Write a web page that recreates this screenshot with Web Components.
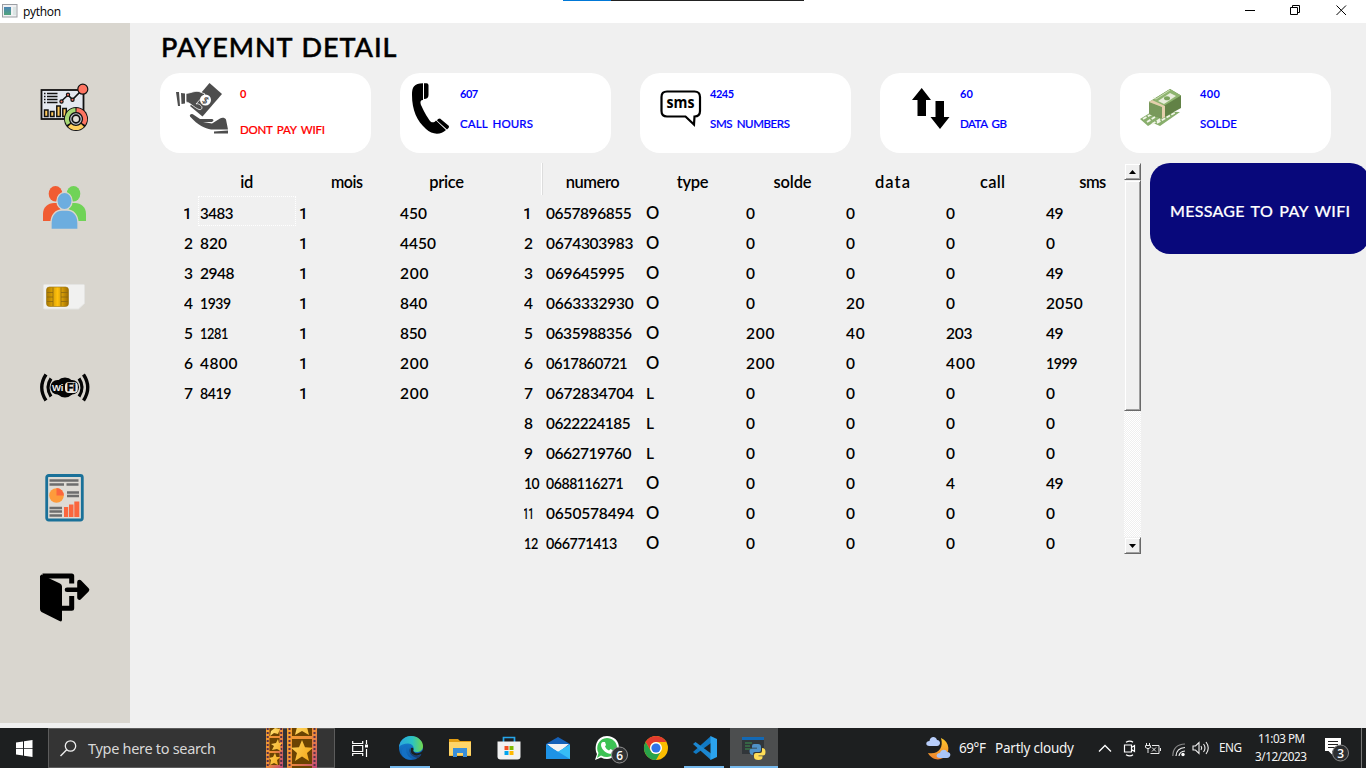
<!DOCTYPE html>
<html lang="en">
<head>
<meta charset="utf-8">
<title>python</title>
<style>
html,body{margin:0;height:100%;overflow:hidden;background:#f0f0f0}
</style>
</head>
<body>
<app-desktop></app-desktop>
<script>
const define=(name,html,setup)=>{
  const t=document.createElement('template');t.innerHTML=html;
  customElements.define(name,class extends HTMLElement{
    constructor(){super();this.attachShadow({mode:'open'}).append(t.content.cloneNode(true));}
    connectedCallback(){if(setup)setup.call(this,this.shadowRoot);}
  });
};

/* Text run fitted to a given width (w) at a given size (s): tracking first, then a horizontal squeeze. */
define('fit-text',`<style>:host{display:inline-block;white-space:pre;line-height:1;flex:none}span{display:inline-block;transform-origin:0 0}</style><span><slot></slot></span>`,function(r){
  this.style.fontSize=this.getAttribute('s')+'px';
  const w=+this.getAttribute('w'),sp=r.querySelector('span');
  const n=this.textContent.length;
  if(!w)return;
  this.style.width=w+'px';
  sp.style.letterSpacing='0px';
  const nat=sp.getBoundingClientRect().width;
  if(n<2)return;
  const ls=Math.max(-.5,(w-nat)/(n-1));
  sp.style.letterSpacing=ls+'px';
  const full=nat+ls*(n-1);
  if(full>w+.5)sp.style.transform=`scaleX(${w/full})`;
});

const ICONS={
dash:`<svg width="50" height="50" viewBox="0 0 50 50"><rect x="1.500" y="6" width="42" height="29" fill="#e4e8f0" stroke="#111" stroke-width="1.8"/><path d="M4 9.500h1.500M4 12.500h1.500M4 15.500h1.500M4 18.500h1.500M7 9.500h10.500M7 12.500h10.500M7 15.500h10.500M7 18.500h10.500" stroke="#111" stroke-width="1.7"/><g fill="#ffc95c" stroke="#111" stroke-width="1.500"><rect x="4.500" y="26" width="3.500" height="6.500"/><rect x="10.500" y="27.500" width="3.500" height="5"/><rect x="16.800" y="22" width="3.500" height="10.500"/><rect x="22.800" y="24.500" width="3.500" height="8"/></g><path d="M21 17.500L28 11l4.500 4.500L42 6" fill="none" stroke="#111" stroke-width="1.6"/><g fill="#fe7562" stroke="#111" stroke-width="1.2"><circle cx="21.500" cy="17.500" r="1.600"/><circle cx="28" cy="10.800" r="1.600"/><circle cx="32.500" cy="15.800" r="1.600"/><circle cx="42.800" cy="5.200" r="5"/></g><circle cx="36" cy="35" r="12" fill="#111"/><g fill="none" stroke-width="4"><path d="M36.500 26A9 9 0 0 1 43.500 40" stroke="#fe7562"/><path d="M42.500 41.300A9 9 0 0 1 29.500 41.300" stroke="#ffd05f"/><path d="M28.500 40A9 9 0 0 1 35.500 26" stroke="#a7d875"/></g><circle cx="36" cy="35" r="5.800" fill="#c4c8d2"/><circle cx="36" cy="35" r="3.800" fill="#e2ded7" stroke="#111" stroke-width="1.700"/></svg>`,
people:`<svg width="50" height="50" viewBox="0 0 50 50"><g fill="#f15c32"><ellipse cx="15.500" cy="9.800" rx="6.800" ry="7.800"/><path d="M3 37v-7c0-7 5-11 11-11h4l3 8-7 10z"/></g><g fill="#70d357"><ellipse cx="33.500" cy="9.800" rx="6.800" ry="7.800"/><path d="M46 37v-7c0-7-5-11-11-11h-4l-3 8 7 10z"/></g><g fill="#6caddf" stroke="#d9d6cf" stroke-width="1.300"><ellipse cx="24.500" cy="17" rx="7.600" ry="8.600"/><path d="M11 45.500V39c0-8 5-13 11-13h5c6 0 11 5 11 13v6.500z"/></g></svg>`,
sim:`<svg width="50" height="50" viewBox="0 0 50 50"><defs><linearGradient id="g"><stop stop-color="#a87800"/><stop offset=".5" stop-color="#ffc10d"/><stop offset="1" stop-color="#9c6b00"/></linearGradient></defs><path d="M4.500 11.500h39a1 1 0 0 1 1 1v18l-6 5.500h-34a1 1 0 0 1-1-1V12.500a1 1 0 0 1 1-1z" fill="#f1f1f0" stroke="#e4e4e2"/><rect x="6.500" y="14" width="22" height="19.500" rx="3" fill="url(#g)" stroke="#98710a" stroke-width=".6"/><path d="M7 19.500h6M7 24h6M7 28.500h6M13 14.500v18.500M21 14.500v18.500M21 19.500h7M21 24h7M21 28.500h7" fill="none" stroke="#8b6812" stroke-width=".8"/></svg>`,
wifi:`<svg width="50" height="50" viewBox="0 0 50 50"><circle cx="25" cy="23.500" r="10" fill="#050505"/><rect x="10.500" y="16" width="28.500" height="14.500" rx="7" fill="#050505"/><rect x="25" y="18" width="12.800" height="11" rx="4" fill="#e9e6df"/><text x="12" y="26.800" font-family="Liberation Sans" font-weight="700" font-size="9.500" fill="#eee" textLength="11.500" lengthAdjust="spacingAndGlyphs">Wi</text><text x="27" y="27.200" font-family="Liberation Sans" font-weight="700" font-size="10" fill="#000" stroke="#000" stroke-width=".5">Fi</text><path d="M11 14.500q-6 9 0 18M39 14.500q6 9 0 18" fill="none" stroke="#050505" stroke-width="3.200"/><path d="M6 10.500q-8.500 13 0 26M43.500 10.500q8.500 13 0 26" fill="none" stroke="#050505" stroke-width="3.400"/></svg>`,
report:`<svg width="50" height="50" viewBox="0 0 50 50"><rect x="6.700" y="1.500" width="35.600" height="44.500" rx="2" fill="#dedbd5" stroke="#1a7199" stroke-width="2.800"/><path d="M9.500 6.500h29M9.500 10.500h14.500M26.500 10.500h12M27 18.500h12M27 22h12M9.500 34h12.500M9.500 37.500h12.500M9.500 41.500h12.500" stroke="#6d6d6d" stroke-width="2.300"/><circle cx="16.500" cy="21.500" r="7.300" fill="#fe9b3b"/><path d="M16.500 14a7.500 7.500 0 0 1 7.300 7.500h-7.300z" fill="#fb663d"/><path d="M24 33h4.200v10H24zM29 30.500h4.500v12.500H29zM34.300 27.500h5v15.500h-5z" fill="#fb663d"/></svg>`,
exit:`<svg width="50" height="50" viewBox="0 0 50 50"><path d="M2.500 3H31.700V10.500M21 35.200H31.700V23" fill="none" stroke="#000" stroke-width="5" stroke-linejoin="round"/><path d="M0 3L1.500 1.500 10.500 6 20 10.500q2 .8 2 3V46.500q0 2.800-2.500 1.500L1.500 39Q0 38 0 36z"/><path d="M27 16.800H44M39.500 9L47 16.800 39.500 24.500z" stroke="#000" stroke-width="4.600" stroke-linecap="round" stroke-linejoin="round"/></svg>`,
pay:`<svg width="53" height="54" viewBox="0 0 53 54"><g fill="#4d4d4d"><path d="M33.500 1L46 12 26.500 34.500 14 24z"/><path d="M0 10h3l1 14H2zM5 11l4 .5v10L5.500 22z"/><path d="M10 11.500c5-.5 9-3 13-2l6 2.500-9 10c2-1 5 1 6 3 0 2-1 3-3 2.500-5-2-9-7-13-7.500z" stroke="#fff" stroke-width=".8"/><path d="M14 35.500c-1-2 2-3.500 4-1.500l6 4h12c2.500.5 1.500 3-1 3H27l9 1.500 8-5c2-1.500 5-1 6 1l2 10H35c-6-1-13-4-21-13z" transform="translate(0 -1)"/><path d="M38 49.500l14-1v3H38z"/></g><circle cx="29.500" cy="18" r="5.500" fill="#fff"/><text x="27" y="21.500" font-size="9" font-weight="700" font-family="Lato" fill="#4d4d4d" transform="rotate(35 29.500 18)">$</text></svg>`,
phone:`<svg width="38" height="52" viewBox="0 0 38 52"><path d="M0 12C0 4 2 .5 11 .3V17c-3-.3-3 3-1.500 6 3 7 7 13 9 15.500 2 1.500 4 1 5.500-1L34 47C29 52 20 52 14 46 5 38 0 27 0 12z"/><path d="M12 .3h2.500q2 0 2 2V12q0 4-4.500 4zM26 36l2-.5 9 7.500q.5 1.500-2 3.500l-10-9z"/></svg>`,
sms:`<svg width="42" height="38" viewBox="0 0 42 38"><path d="M7 1.500h27.500q5.500 0 5.500 5.500v14q0 5.500-5.500 5.500l-.5 8-8.500-8H7Q1.500 26.500 1.500 21V7Q1.500 1.500 7 1.500z" fill="#fff" stroke="#000" stroke-width="2.200"/><text x="6.500" y="18" font-family="Open Sans" font-weight="700" font-size="15.500" textLength="28" lengthAdjust="spacingAndGlyphs">sms</text></svg>`,
data:`<svg width="38" height="42" viewBox="0 0 38 42"><path d="M9.700 0L19 12h-5v16H5.500V12H0zM23.500 13H32v16h5.500L28 41 18.500 29h5z"/></svg>`,
cash:`<svg width="42" height="40" viewBox="0 0 42 40"><path d="M0 31l13-8 27 1-20 14-7-3-5 3z" fill="#88ae6c"/><path d="M3 31l9-5M7 34l8-5M17 35l19-11M12 36l10-6" stroke="#f1f4e7" stroke-width="1.800" stroke-dasharray="4 1.500"/><path d="M9 14L30 1l11 6.500V20L22 30.500 9 26z" fill="#628246"/><path d="M9 14l13 5v11.500L9 26z" fill="#78995b"/><path d="M9 14L30 1l11 6.500L22 19z" fill="#8eb46f"/><path d="M18 13l12-8 6 3-12 8z" fill="#e8eddb"/><ellipse cx="27" cy="10.300" rx="3" ry="2" fill="#7ca45d"/><path d="M12 12l13 6v11l-3 1.500V19L9 14z" fill="#e4cfac"/><path d="M13 9.500l3 1.500 14-9" stroke="#e3edcf" stroke-width=".7" fill="none"/></svg>`,
app:`<svg width="16" height="14" viewBox="0 0 16 14"><defs><linearGradient id="a" x2="0" y2="1"><stop stop-color="#4b84b5"/><stop offset="1" stop-color="#51a47b"/></linearGradient></defs><rect x=".5" y=".5" width="14.500" height="12.500" fill="#f1f1f3" stroke="#9b9ea3"/><rect x="2" y="3" width="7" height="8" fill="url(#a)"/><path d="M11 3h3v8h-3z" fill="#dbe5e4"/></svg>`,
start:`<svg width="17" height="17" viewBox="0 0 17 17"><path d="M0 2.500l7-1v6.700H0zM8 1.300L16.500 0v8.200H8zM0 9h7v6.500l-7-1zM8 9h8.500v8L8 15.800z" fill="#fff"/></svg>`,
find:`<svg width="17" height="17" viewBox="0 0 17 17"><circle cx="10.500" cy="6" r="5.200" fill="none" stroke="#eee" stroke-width="1.300"/><path d="M6.700 9.800L.5 16" stroke="#eee" stroke-width="1.400"/></svg>`,
film:`<svg width="52" height="40" viewBox="0 0 52 40" style="overflow:hidden"><defs><linearGradient id="f" x2="1" y2="1"><stop stop-color="#f5a12e"/><stop offset=".5" stop-color="#ee8d39"/><stop offset="1" stop-color="#c14879"/></linearGradient><linearGradient id="s" x2="1" y2="1"><stop stop-color="#ffe377"/><stop offset="1" stop-color="#f5a513"/></linearGradient></defs><rect width="17" height="40" fill="url(#f)"/><rect x="21" width="30" height="40" fill="url(#f)"/><path d="M1.700 0v40M15.200 0v40M23.500 0v40M48.500 0v40" stroke="#57304b" stroke-width="2" stroke-dasharray="2 2"/><path d="M3.500 0h10v8h-10zM3.500 10h10v13h-10zM3.500 25h10v12h-10zM26 0h20v8H26zM26 11h20v25H26zM26 38h20v2H26z" fill="#6b4302"/><path fill="url(#s)" d="M36 12l3 7.300 8 .5-6 5.200 2 8-7-4.500-7 4.500 2-8-6-5.200 8-.5zM36-14l3 7.300 8 .5-6 5.200 2 8-7-4-7 4 2-8-6-5.200z"/><path fill="url(#s)" d="M12 11l1 4h3l-2 3 1 5-4-2-5 1 2-4-3-2 5-1zM9 25l1.500 4h4L11 32l1 5-4-2-4 2 1-5-2-2 4-1zM5 3l4-3 5 1-2 5-4-1-4 3z"/></svg>`,
task:`<svg width="17" height="17" viewBox="0 0 17 17"><path d="M.7 1v2.500h10V1M.7 16v-2.500h10V16M.7 5.500h10v6H.7zM14.500 0v4M14.500 9v8" fill="none" stroke="#fff" stroke-width="1.200"/><path d="M13 4.500h3v3h-3z" fill="#fff"/></svg>`,
edge:`<svg width="24" height="24" viewBox="0 0 24 24"><defs><linearGradient id="e" x2="1"><stop stop-color="#2aa6df"/><stop offset=".55" stop-color="#2bc3c3"/><stop offset="1" stop-color="#72d84c"/></linearGradient><linearGradient id="d" x2="0" y2="1"><stop stop-color="#1687d8"/><stop offset="1" stop-color="#0f58a8"/></linearGradient></defs><circle cx="12" cy="12" r="12" fill="url(#d)"/><path d="M0 11C1 4 6 0 12 0c7 0 12 5 12 10 0 4-3 6-6.500 6-3 0-4-1-3-2.500C15.500 11 13 7.500 9 7.500 5 7.500 1.500 9 0 11z" fill="url(#e)"/><path d="M9.500 9C5 12 7 21 14 23 7 25 1 20 3 14c1-3 3.500-5 6.500-5z" fill="#1470c4"/><path d="M12 11c-3 4 1 9 6 8.500 3 0 5-1.500 4.500-1-1 1.500-2 2.500-3.500 3.500C12 21 8 15 12 11z" fill="#1b3c6f"/><path d="M14.500 13.500C13 17 20 19.500 24 14v4l-2 .3c-6 3-12-.3-10-6 1-1 2.800-.2 2.500 1.200z" fill="#1c1f20"/></svg>`,
folder:`<svg width="22" height="20" viewBox="0 0 22 20"><path d="M0 1h9l2 2h11v15H0z" fill="#e39d12"/><path d="M0 4h22v13.500H0z" fill="#ffd569"/><path d="M4 10h14v9h-4v-4H8v4H4z" fill="#3b8fd8"/></svg>`,
store:`<svg width="24" height="24" viewBox="0 0 24 24"><path d="M6.500 7V1.500h11V7" fill="none" stroke="#26a5e9" stroke-width="1.700"/><path d="M.5 5.500h23v15q0 3-3 3h-17q-3 0-3-3z" fill="#f1f1f1"/><path fill="#f25022" d="M7.500 10h4v4h-4z"/><path fill="#7fba00" d="M12.500 10h4v4h-4z"/><path fill="#00a4ef" d="M7.500 15h4v4h-4z"/><path fill="#ffb900" d="M12.500 15h4v4h-4z"/></svg>`,
mail:`<svg width="24" height="24" viewBox="0 0 24 24"><path d="M0 8L12 1l12 7v6H0z" fill="#1561b8"/><path d="M1 8h22L12 17z" fill="#f3f3f3"/><path d="M0 8.500L12 16l12-7.500V23H0z" fill="#28a8ea"/><path d="M0 23L24 8.500V23z" fill="#36bdf6"/><path d="M0 8.500L24 23H0z" fill="#1e93e6"/></svg>`,
wa:`<svg width="34" height="28" viewBox="0 0 34 28"><path d="M0 24l2-6C-1 12 1 0 12 0c7 0 12 5 12 11.500S18 23 12 23c-2 0-4-.5-6-1.500z" fill="#fff"/><path d="M2 22l1.500-5C0 11 4 2 12 2c5 0 10 4 10 9.500S17 21 12 21c-2 0-4-.5-6-1.500z" fill="#3cc254"/><path d="M8 6l2 0 1 3-1 1.500c1 2 2 3 4 4l1.500-1.500 3 1.500c0 3-2 3.500-4 3.200C10 17 6 12 6 9c0-2 1-3 2-3z" fill="#fff"/><circle cx="24.500" cy="19" r="8" fill="#303234" stroke="#909090" stroke-width="1"/><text x="21.200" y="23.500" fill="#fff" font-size="12.500" font-weight="600" font-family="Open Sans" textLength="6.800" lengthAdjust="spacingAndGlyphs">6</text></svg>`,
chrome:`<svg width="24" height="24" viewBox="0 0 24 24"><circle cx="12" cy="12" r="12" fill="#fbbd00"/><path d="M1.600 6A12 12 0 0 1 22.400 6H12a6 6 0 0 0-5.200 9z" fill="#e33b2e"/><path d="M1.600 6A12 12 0 0 0 12 24l5.200-9A6 6 0 0 1 6.800 15z" fill="#29a34a"/><circle cx="12" cy="12" r="6" fill="#fff"/><circle cx="12" cy="12" r="4.600" fill="#2f73e8"/></svg>`,
code:`<svg width="24" height="24" viewBox="0 0 24 24"><path d="M0 16L18 0v7L3 18z" fill="#1179c3"/><path d="M0 8l2.500-2L18 17.500v6.500z" fill="#1c87d0"/><path d="M17.500 0L24 3v18l-6.500 3z" fill="#2ba3ee"/></svg>`,
py:`<svg width="24" height="24" viewBox="0 0 24 24"><path d="M0 1h22v17H0z" fill="#31363a"/><path d="M0 1h22v3H0z" fill="#1369b5"/><path d="M3 7h7M3 10h5M3 13h6" stroke="#397649" stroke-width="1.300"/><path d="M12 8h4q3 0 3 3v3q0 2-2 2h-4q-2 0-2 2v1q-3.500 0-3.500-4 0-2.500 3-2.500h4.500v-.8h-5V10q0-2 2-2z" fill="#4f92c8"/><path d="M20 12q3.500 0 3.500 4 0 3.500-2.500 3.500h-4.500v.8h4v1q0 2.700-4 2.700-4.500 0-4.500-3v-2q0-2 2-2h4q2 0 2-2z" fill="#ffde57"/></svg>`,
moon:`<svg width="25" height="23" viewBox="0 0 25 23"><defs><linearGradient id="m" x2="0" y2="1"><stop stop-color="#ffc92b"/><stop offset="1" stop-color="#ee822d"/></linearGradient></defs><path d="M15 1c9 4 10 15 2 20-5 3-12 1-15-5 10 2 16-5 13-15z" fill="url(#m)"/><path d="M3.500 9C-1 9-.5 4 3.500 4 4-1 10-1 11 3c4 0 4 6 0 6z" fill="#b9cffb"/><path d="M14 21c-5 0-4-5 0-5 1-4 6-4 7-1 5 0 4 6 0 6z" fill="#a9c4f6"/></svg>`,
up:`<svg width="14" height="9" viewBox="0 0 14 9"><path d="M1 7.500l6-6 6 6" fill="none" stroke="#fff" stroke-width="1.300"/></svg>`,
meet:`<svg width="14" height="17" viewBox="0 0 14 17"><path d="M1.500 5h7v7h-7zM8.500 7.500l3-2v6l-3-2M3 2.300q4-2.500 7 0M3 14.700q4 2.500 7 0" fill="none" stroke="#fff" stroke-width="1.200"/></svg>`,
power:`<svg width="17" height="13" viewBox="0 0 17 13"><path d="M1.500 1v2.500M4.500 1v2.500M.5 3.500h5v2q-2.500 2.500-5 0zM3 7v4M5.500 11.500H14v-8H7M15.500 6v3M7 5.500l4 4M11 5.500l-4 4" fill="none" stroke="#e8e8e8"/></svg>`,
net:`<svg width="14" height="14" viewBox="0 0 14 14"><g fill="none" stroke-width="1.200"><path d="M.8 13Q1 1.500 13 1" stroke="#888"/><path d="M4 13q.5-8 9-8.500M7 13q.5-4.500 6-5" stroke="#eee"/></g><circle cx="11" cy="11.500" r="1.700" fill="#fff"/></svg>`,
vol:`<svg width="18" height="14" viewBox="0 0 18 14"><path d="M1 5h2.500L7 1.500v11L3.500 9H1zM9 5q1.500 2 0 4M11.500 3q3 4 0 8M14 1q4.500 6 0 12" fill="none" stroke="#eee" stroke-width="1.100"/></svg>`,
note:`<svg width="26" height="26" viewBox="0 0 26 26"><path d="M0 1h16v13H7v3.500L3.500 14H0z" fill="#fff"/><path d="M3 4.500h10M3 7.500h10M3 10.500h7" stroke="#222"/><circle cx="15.500" cy="16" r="8" fill="#2c2e30" stroke="#888"/><text x="12.200" y="20.500" fill="#fff" font-size="12.500" font-weight="600" font-family="Open Sans" textLength="6.800" lengthAdjust="spacingAndGlyphs">3</text></svg>`
};
define('ui-icon',`<style>:host{display:block;flex:none}svg{display:block;overflow:visible}</style><div></div>`,function(r){r.querySelector('div').innerHTML=ICONS[this.getAttribute('n')];});

define('title-bar',`<style>
:host{display:flex;height:23px;background:#fff;align-items:center;position:relative;font-family:"Open Sans",sans-serif}
.i{margin-left:2px;margin-top:-2px}fit-text{margin-left:5px;margin-top:1px}
.c{margin-left:auto;display:block;margin-top:-3px;margin-right:19px}
.t{position:absolute;left:563px;top:0;width:241px;height:1px;background:linear-gradient(90deg,#0078d7 48px,#222 48px)}
</style><ui-icon class="i" n="app"></ui-icon><fit-text s="12" w="38">python</fit-text>
<svg class="c" width="102" height="12" viewBox="0 0 102 12"><path d="M0 6.500h10M45.500 3.500h7v7h-7zM47.500 3.500v-2h7v7h-2M91.500 1.500l9.500 9.500M101 1.500L91.500 11" fill="none" stroke="#000"/></svg><div class="t"></div>`);

define('side-bar',`<style>
:host{display:flex;flex-direction:column;width:130px;height:700px;background:#d9d6cf;box-sizing:border-box;padding:61px 0 0 40px}
ui-icon{height:50px}
</style><ui-icon n="dash"></ui-icon><ui-icon n="people" style="margin-top:50px"></ui-icon><ui-icon n="sim" style="margin-top:39px"></ui-icon><ui-icon n="wifi" style="margin-top:41px"></ui-icon><ui-icon n="report" style="margin-top:60px"></ui-icon><ui-icon n="exit" style="margin-top:49px"></ui-icon>`);

/* icon, value, value width, label, label width, icon x, icon y, text x, alert */
const CARDS=[['pay','0',7,'DONT PAY WIFI',85,16,9,80,1],['phone','607',18,'CALL HOURS',73,12,10,60],['sms','4245',24,'SMS NUMBERS',80,20,17,70],['data','60',13,'DATA GB',47,32,15,80],['cash','400',20,'SOLDE',37,20,15,80]];
define('stat-row',`<style>:host{display:flex;gap:29px;height:80px}
.k{display:flex;width:211px;height:80px;border-radius:20px;background:#fff;color:#00f;flex:none}
.k.r{color:#f00}.p{flex:none;box-sizing:border-box}.t{display:flex;flex-direction:column}
.v{height:30px;padding-top:15px;box-sizing:border-box;font-weight:700}.l{padding-top:15px;font-weight:500;word-spacing:2px;-webkit-text-stroke:.2px}.r .l{padding-top:21px}fit-text{display:block}</style>`,function(r){
  for(const [i,v,vw,l,lw,x,y,pw,red] of CARDS)r.innerHTML+=`<div class="k ${red?'r':''}"><div class="p" style="width:${pw}px;padding:${y}px 0 0 ${x}px"><ui-icon n="${i}"></ui-icon></div><div class="t"><div class="v"><fit-text s="11" w="${vw}">${v}</fit-text></div><div class="l"><fit-text s="11.5" w="${lw}">${l}</fit-text></div></div></div>`;
});

/* Advance widths of the table's figures, used to space each number. */
const ADV={0:10.2,1:5.5,2:8.700,3:8.200,4:9,5:8.200,6:8.800,7:7.900,8:8.600,9:8.700,O:14,L:9};
const num=t=>`<fit-text ${/^1+$/.test(t)?'class="one"':t=='O'?'class="o"':''} s="${t=='O'?16.5:15.5}" w="${([...t].reduce((a,c)=>a+ADV[c],0)-(t[0]=='1'?0:.5)).toFixed(1)}">${t}</fit-text>`;
define('data-table',`<style>
:host{display:block;flex:none;height:391px;overflow:hidden;font-weight:600;box-sizing:border-box}
.h,.b{display:grid;grid-template-columns:var(--cols)}
.h{height:33px;position:relative}.h>*{justify-self:start;width:93px;text-align:center;padding-top:9px}
.h fit-text{display:inline-block}
.b{height:30px}.b>*{padding-top:10px}.b fit-text{display:block}
.b fit-text.one{font-family:Roboto,sans-serif;font-weight:500;margin:1px 0 0 -1px}
.b fit-text.o{margin-top:-1px}
:host([focus]) .first .f{position:relative}
:host([focus]) .first .f::before{content:"";position:absolute;left:-2px;top:0;width:96px;height:28px;border:1px dotted #fff}
:host([line]) .h::after{content:"";position:absolute;left:17px;top:0;width:1px;height:32px;background:#fff;border-right:1px solid #ddd;padding:0;margin:0}
</style>`,function(r){
  const heads=this.getAttribute('heads').split(' ').map(x=>x.split(':'));
  const rows=this.getAttribute('rows').split('|').map(x=>x.trim().split(' '));
  this.style.setProperty('--cols',this.getAttribute('cols'));
  r.innerHTML+=`<div class="h"><span style="width:0"></span>${heads.map(([t,w])=>`<div><fit-text s="16.5" w="${w}">${t}</fit-text></div>`).join('')}</div>`+
   rows.map((c,i)=>`<div class="b ${i?'':'first'}"><div>${num(String(i+1))}</div>${c.map((t,j)=>`<div class="${j?'':'f'}">${num(t)}</div>`).join('')}</div>`).join('');
});

define('scroll-bar',`<style>
:host{display:flex;flex-direction:column;width:17px;height:391px;flex:none;background:repeating-conic-gradient(#fff 0 25%,#efefef 0 50%) 0 0/2px 2px}
.b,.h{box-sizing:border-box;background:#f0f0f0;border:1px solid;border-color:#f0f0f0 #696969 #696969 #f0f0f0;box-shadow:inset 1px 1px #fff,inset -1px -1px #a0a0a0}
.b{height:17px;display:grid;place-items:center}.h{height:231px}.b:last-child{margin-top:auto}
svg{display:block}
</style><div class="b"><svg width="7" height="4"><path d="M0 4L3.500 0 7 4z"/></svg></div><div class="h"></div><div class="b"><svg width="7" height="4"><path d="M0 0h7L3.500 4z"/></svg></div>`);

define('pay-button',`<style>:host{display:flex;flex:none;width:220px;height:91px;border-radius:20px;background:#08087b;color:#fff;box-sizing:border-box;padding:39.500px 0 0 20px;font-weight:500;word-spacing:2px;-webkit-text-stroke:.2px}</style><slot></slot>`);

define('payment-view',`<style>
:host{display:flex;flex-direction:column;flex:1;min-width:0;padding-left:30px;font-family:Lato,sans-serif;color:#000;overflow:hidden}
.t{height:50px;box-sizing:border-box;padding:10px 0 0 1px;font-weight:500;word-spacing:1px;-webkit-text-stroke:.5px}
.g{display:flex;margin-top:10px}
</style><div class="t"><fit-text s="27" w="235.5">PAYEMNT DETAIL</fit-text></div><stat-row></stat-row>
<div class="g"><data-table focus style="margin-left:24px;width:316px" cols="16px 100px 100px 100px" heads="id:13 mois:32 price:35" rows="3483 1 450|820 1 4450|2948 1 200|1939 1 840|1281 1 850|4800 1 200|8419 1 200"></data-table>
<data-table line style="margin-left:24px;width:600px" cols="22px repeat(5,100px) 78px" heads="numero:54 type:32 solde:38 data:35 call:25 sms:27" rows="0657896855 O 0 0 0 49|0674303983 O 0 0 0 0|069645995 O 0 0 0 49|0663332930 O 0 20 0 2050|0635988356 O 200 40 203 49|0617860721 O 200 0 400 1999|0672834704 L 0 0 0 0|0622224185 L 0 0 0 0|0662719760 L 0 0 0 0|0688116271 O 0 0 4 49|0650578494 O 0 0 0 0|066771413 O 0 0 0 0"></data-table>
<scroll-bar></scroll-bar><pay-button style="margin-left:9px"><fit-text s="16" w="180">MESSAGE TO PAY WIFI</fit-text></pay-button></div>`);

define('task-bar',`<style>
:host{display:flex;height:40px;background:#1d1f20;color:#f4f4f4;align-items:center;font-family:"Noto Sans",sans-serif}
.s{width:48px;display:grid;place-items:center}
.q{width:287px;height:40px;box-sizing:border-box;background:#343434;border:1px solid #5c5c5c;display:flex;align-items:center;padding-left:11px;color:#d8d8d8}
.q fit-text{margin-left:11px;margin-top:1px}.q .f{margin-left:50px}
.k{width:49px;height:40px;display:grid;place-items:center;position:relative;flex:none}
.k[on]::after{content:"";position:absolute;left:4px;right:5px;bottom:0;height:2px;background:#76b9ed}
.k[act]{background:#4c4e4f}.k[act]::after{left:0;right:0}
.c{display:flex;flex-direction:column;gap:6px;align-items:center;width:52px;margin-left:13px}
.l{width:1px;height:40px;background:#777;margin-left:10px}
</style><div class="s"><ui-icon n="start"></ui-icon></div><div class="q"><ui-icon n="find"></ui-icon><fit-text s="14.5" w="128">Type here to search</fit-text><ui-icon class="f" n="film"></ui-icon></div>
<div class="k" style="width:51px"><ui-icon n="task"></ui-icon></div>
<div class="k" on><ui-icon n="edge"></ui-icon></div><div class="k"><ui-icon n="folder"></ui-icon></div><div class="k"><ui-icon n="store"></ui-icon></div><div class="k"><ui-icon n="mail"></ui-icon></div><div class="k"><ui-icon n="wa" style="margin:4px 0 0 11px"></ui-icon></div><div class="k"><ui-icon n="chrome"></ui-icon></div><div class="k" on><ui-icon n="code"></ui-icon></div><div class="k" on act style="width:48px;margin-left:1px"><ui-icon n="py"></ui-icon></div>
<ui-icon n="moon" style="margin-left:148px"></ui-icon><fit-text s="13.5" w="27" style="margin-left:8px;margin-top:1px">69°F</fit-text><fit-text s="13.5" w="79" style="margin-left:9px;margin-top:1px">Partly cloudy</fit-text>
<ui-icon n="up" style="margin-left:24px"></ui-icon><ui-icon n="meet" style="margin-left:11px"></ui-icon><ui-icon n="power" style="margin-left:8px"></ui-icon><ui-icon n="net" style="margin-left:10px;margin-top:3px"></ui-icon><ui-icon n="vol" style="margin-left:6px"></ui-icon><fit-text s="12" w="23" style="margin-left:9px">ENG</fit-text>
<div class="c"><fit-text s="12" w="47">11:03 PM</fit-text><fit-text s="12" w="52">3/12/2023</fit-text></div><ui-icon n="note" style="margin-left:18px;margin-top:4px"></ui-icon><div class="l"></div>`);

define('app-desktop',`<style>:host{display:flex;flex-direction:column;width:1366px;height:768px;overflow:hidden;background:#f0f0f0}.m{display:flex;height:705px}</style><title-bar></title-bar><div class="m"><side-bar></side-bar><payment-view></payment-view></div><task-bar></task-bar>`);
</script>
</body>
</html>
